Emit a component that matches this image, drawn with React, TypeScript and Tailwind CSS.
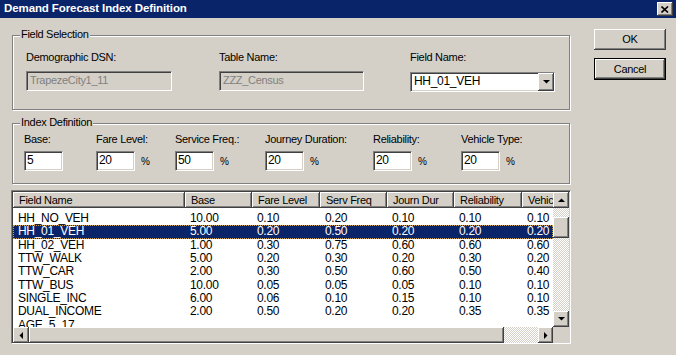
const sunken =
  "border border-t-[#808080] border-l-[#808080] border-b-white border-r-white shadow-[inset_1px_1px_0_#404040,inset_-1px_-1px_0_#d4d0c8]";
const raised =
  "bg-[#d4d0c8] shadow-[inset_-1px_-1px_0_#404040,inset_1px_1px_0_#fff,inset_-2px_-2px_0_#808080,inset_2px_2px_0_#d4d0c8]";
const dither =
  "bg-[#d4d0c8] bg-[image:repeating-conic-gradient(#ffffff_0_25%,#d4d0c8_0_50%)] bg-[length:2px_2px]";

const columns = [
  { label: "Field Name", w: "w-[172px]" },
  { label: "Base", w: "w-[67px]" },
  { label: "Fare Level", w: "w-[68px]" },
  { label: "Serv Freq", w: "w-[67px]" },
  { label: "Journ Dur", w: "w-[67px]" },
  { label: "Reliability", w: "w-[68px]" },
  { label: "Vehicle Type", w: "w-[70px]" },
];

const rows = [
  ["HH_NO_VEH", "10.00", "0.10", "0.20", "0.10", "0.10", "0.10"],
  ["HH_01_VEH", "5.00", "0.20", "0.50", "0.20", "0.20", "0.20"],
  ["HH_02_VEH", "1.00", "0.30", "0.75", "0.60", "0.60", "0.60"],
  ["TTW_WALK", "5.00", "0.20", "0.30", "0.20", "0.30", "0.20"],
  ["TTW_CAR", "2.00", "0.30", "0.50", "0.60", "0.50", "0.40"],
  ["TTW_BUS", "10.00", "0.05", "0.05", "0.05", "0.10", "0.10"],
  ["SINGLE_INC", "6.00", "0.06", "0.10", "0.15", "0.10", "0.10"],
  ["DUAL_INCOME", "2.00", "0.50", "0.20", "0.20", "0.35", "0.35"],
  ["AGE_5_17", "", "", "", "", "", ""],
];

const indexFields = [
  { label: "Base:", value: "5", w: "w-[72px]", pct: false },
  { label: "Fare Level:", value: "20", w: "w-[79px]", pct: true },
  { label: "Service Freq.:", value: "50", w: "w-[90px]", pct: true },
  { label: "Journey Duration:", value: "20", w: "w-[108px]", pct: true },
  { label: "Reliability:", value: "20", w: "w-[88px]", pct: true },
  { label: "Vehicle Type:", value: "20", w: "w-[90px]", pct: true },
];

function Arrow({ dir }: { dir: "up" | "down" | "left" | "right" }) {
  const pts = {
    up: "0,4 7,4 3.5,0.5",
    down: "0,0 7,0 3.5,3.5",
    left: "4,0 4,7 0.5,3.5",
    right: "0,0 0,7 3.5,3.5",
  }[dir];
  const horiz = dir === "up" || dir === "down";
  return (
    <svg width={horiz ? 7 : 4} height={horiz ? 4 : 7} viewBox={horiz ? "0 0 7 4" : "0 0 4 7"}>
      <polygon points={pts} fill="#000" />
    </svg>
  );
}

function GroupBox({ title, className, children }: { title: string; className: string; children: React.ReactNode }) {
  return (
    <div className={`relative border border-[#808080] shadow-[inset_1px_1px_0_#fff,1px_1px_0_#fff] ${className}`}>
      <span className="absolute left-[7px] top-[-8px] bg-[#d4d0c8] px-[1px] leading-[13px]">{title}</span>
      {children}
    </div>
  );
}

export default function App() {
  return (
    <div className="h-[355px] w-[676px] overflow-hidden bg-[#d4d0c8] font-['Liberation_Sans',Arial,sans-serif] text-[11px] tracking-[-0.3px] text-black">
      <div className="flex h-[18px] items-center justify-between bg-[#0a246a] pl-[4px] pr-[3px]">
        <span className="text-[11.5px] font-bold tracking-[-0.1px] text-white">Demand Forecast Index Definition</span>
        <div className={`flex h-[14px] w-[16px] items-center justify-center ${raised}`}>
          <svg width="8" height="7" viewBox="0 0 8 7">
            <path d="M0.5 0.5 L7 6.5 M7 0.5 L0.5 6.5" stroke="#000" strokeWidth="1.6" />
          </svg>
        </div>
      </div>

      <div className="flex pl-[12px] pt-[11px]">
        <div className="mt-[6px] flex w-[558px] flex-col">
          <GroupBox title="Field Selection" className="h-[75px] pl-[13px] pt-[15px]">
            <div className="flex">
              <div className="w-[193px]">
                <div className="leading-[13px]">Demographic DSN:</div>
                <div className={`mt-[7px] h-[20px] w-[146px] pl-[3px] leading-[17px] text-[#808080] ${sunken} bg-[#d4d0c8]`}>
                  TrapezeCity1_11
                </div>
              </div>
              <div className="w-[191px]">
                <div className="leading-[13px]">Table Name:</div>
                <div className={`mt-[7px] h-[20px] w-[145px] pl-[3px] leading-[17px] text-[#808080] ${sunken} bg-[#d4d0c8]`}>
                  ZZZ_Census
                </div>
              </div>
              <div>
                <div className="leading-[13px]">Field Name:</div>
                <div className={`mt-[8px] flex h-[20px] w-[145px] items-stretch bg-white ${sunken}`}>
                  <span className="flex-1 pl-[3px] text-[12px] leading-[17px]">HH_01_VEH</span>
                  <div className={`flex w-[16px] items-center justify-center ${raised}`}>
                    <Arrow dir="down" />
                  </div>
                </div>
              </div>
            </div>
          </GroupBox>

          <GroupBox title="Index Definition" className="mt-[13px] h-[61px] pl-[11px] pt-[9px]">
            <div className="flex">
              {indexFields.map((f) => (
                <div key={f.label} className={f.w}>
                  <div className="leading-[13px]">{f.label}</div>
                  <div className="mt-[5px] flex items-center gap-[6px]">
                    <div className={`h-[20px] w-[39px] bg-white pl-[2px] text-[12px] leading-[17px] ${sunken}`}>{f.value}</div>
                    {f.pct && <span className="text-[10px]">%</span>}
                  </div>
                </div>
              ))}
            </div>
          </GroupBox>

          <div className={`-ml-[1px] mt-[6px] flex h-[154px] w-[560px] flex-col ${sunken}`}>
            <div className="flex min-h-0 flex-1 pl-[1px] pt-[1px]">
              <div className="flex w-[540px] flex-col overflow-hidden bg-white">
                <div className="flex h-[16px] shrink-0">
                  {columns.map((c) => (
                    <div
                      key={c.label}
                      className={`${c.w} shrink-0 overflow-hidden whitespace-nowrap bg-[#d4d0c8] pl-[6px] leading-[16px] shadow-[inset_-1px_-1px_0_#404040,inset_1px_1px_0_#fff,inset_-2px_-2px_0_#808080]`}
                    >
                      {c.label}
                    </div>
                  ))}
                </div>
                <div className="pt-[4px]">
                  {rows.map((r, i) => {
                    const sel = i === 1;
                    return (
                      <div
                        key={r[0]}
                        className={`flex h-[13.33px] items-center text-[12px] ${sel ? "bg-[#0a246a] text-white outline outline-1 -outline-offset-1 outline-dotted outline-[#c9a24a]" : ""}`}
                      >
                        {r.map((cell, j) => (
                          <div key={j} className={`${columns[j].w} shrink-0 whitespace-nowrap pl-[5px] leading-[13px]`}>
                            {cell}
                          </div>
                        ))}
                      </div>
                    );
                  })}
                </div>
              </div>
              <div className="flex w-[16px] flex-col">
                <div className={`flex h-[16px] items-center justify-center ${raised}`}>
                  <Arrow dir="up" />
                </div>
                <div className={`h-[9px] ${dither}`} />
                <div className={`h-[21px] ${raised}`} />
                <div className={`flex-1 ${dither}`} />
                <div className={`flex h-[16px] items-center justify-center ${raised}`}>
                  <Arrow dir="down" />
                </div>
              </div>
            </div>
            <div className="flex h-[16px] pl-[1px]">
              <div className={`flex w-[16px] items-center justify-center ${raised}`}>
                <Arrow dir="left" />
              </div>
              <div className={`w-[475px] ${raised}`} />
              <div className={`w-[34px] ${dither}`} />
              <div className={`flex w-[15px] items-center justify-center ${raised}`}>
                <Arrow dir="right" />
              </div>
              <div className="w-[16px] bg-[#d4d0c8]" />
            </div>
          </div>
        </div>

        <div className="ml-[24px] flex flex-col gap-[8px]">
          <div className={`flex h-[21px] w-[72px] items-center justify-center ${raised}`}>OK</div>
          <div className="h-[22px] w-[72px] border border-black">
            <div className={`flex h-full w-full items-center justify-center ${raised}`}>Cancel</div>
          </div>
        </div>
      </div>
    </div>
  );
}
